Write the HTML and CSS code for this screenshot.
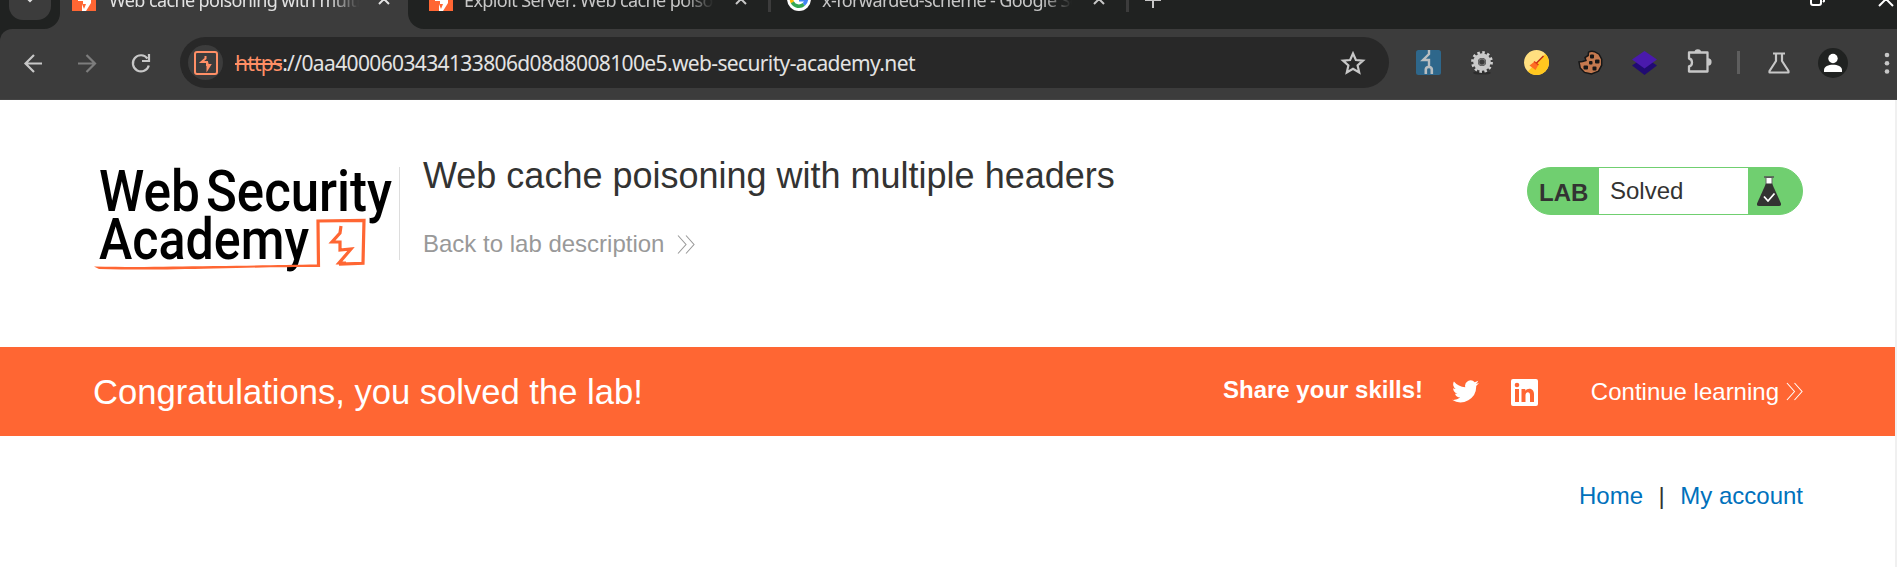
FILE: index.html
```html
<!DOCTYPE html>
<html lang="en">
<head>
<meta charset="utf-8">
<title>Web cache poisoning with multiple headers</title>
<link rel="stylesheet" href="styles.css">
</head>
<body>
<div class="browser">
  <div class="tabstrip">
    <div class="strip-start"><div class="tab-search"><svg width="12" height="8" viewBox="0 0 12 8"><path d="M1 1l5 5 5-5" fill="none" stroke="#ddd" stroke-width="2.2"/></svg></div></div>
    <div class="tab active">
      <svg class="favicon" width="24" height="24" viewBox="0 0 24 24"><path fill="#ff6633" d="M0 0h24v24H0z"/><path fill="#fff" d="M13 0L6 12v2h5v3h-1v7h4l5-8v-3h-5V0z"/><path fill="#ff6633" d="M10 17h4l-2 5z"/></svg>
      <span class="tab-title">Web cache poisoning with multiple</span>
      <svg class="close" width="12" height="12" viewBox="0 0 12 12"><path d="M1 1l10 10M11 1L1 11" stroke="#e3e3e3" stroke-width="2"/></svg>
    </div>
    <div class="strip-rest">
      <div class="tab second">
        <svg class="favicon" width="24" height="24" viewBox="0 0 24 24"><path fill="#ff6633" d="M0 0h24v24H0z"/><path fill="#fff" d="M13 0L6 12v2h5v3h-1v7h4l5-8v-3h-5V0z"/><path fill="#ff6633" d="M10 17h4l-2 5z"/></svg>
        <span class="tab-title">Exploit Server: Web cache poisoning</span>
        <svg class="close" width="12" height="12" viewBox="0 0 12 12"><path d="M1 1l10 10M11 1L1 11" stroke="#c7c7c7" stroke-width="2"/></svg>
      </div>
      <i class="tab-rule"></i>
      <div class="tab third">
        <svg class="favicon" width="24" height="24" viewBox="0 0 24 24"><circle cx="12" cy="12" r="12" fill="#fff"/><g fill="none" stroke-width="3.6"><path stroke="#fbbc05" d="M5.2 9a7.4 7.4 0 0 0 .3 6.6"/><path stroke="#34a853" d="M5.4 15.4a7.4 7.4 0 0 0 11.4 2"/><path stroke="#4285f4" d="M12 12.6h7.4a7.4 7.4 0 0 1-2.6 4.8"/></g></svg>
        <span class="tab-title">x-forwarded-scheme - Google Search</span>
        <svg class="close" width="12" height="12" viewBox="0 0 12 12"><path d="M1 1l10 10M11 1L1 11" stroke="#c7c7c7" stroke-width="2"/></svg>
      </div>
      <i class="tab-rule"></i>
      <svg class="new-tab" width="16" height="16" viewBox="0 0 16 16"><path d="M8 0v16M0 8h16" stroke="#c7c7c7" stroke-width="2"/></svg>
      <svg class="restore" width="16" height="16" viewBox="0 0 16 16"><rect x="1" y="4" width="10" height="11" rx="2" fill="none" stroke="#fff" stroke-width="2"/><path d="M4 1h8q2 0 2 2v8l-1 1" fill="none" stroke="#fff" stroke-width="2"/></svg>
      <svg class="win-close" width="16" height="16" viewBox="0 0 16 16"><path d="M1 1l14 14M15 1L1 15" stroke="#fff" stroke-width="2"/></svg>
    </div>
  </div>
  <div class="toolbar">
    <div class="navs">
      <svg width="54" height="28" viewBox="0 0 54 28"><path d="M42 14H25.500M34 5.500L25.500 14l8.500 8.500" transform="translate(0 .5)" fill="none" stroke="#c7c7c7" stroke-width="2.200"/></svg>
      <svg width="54" height="28" viewBox="0 0 54 28"><path d="M24 14.500h17M32.500 6l8.500 8.500-8.500 8.500" fill="none" stroke="#7d7d7d" stroke-width="2.200"/></svg>
      <svg width="54" height="28" viewBox="0 0 54 28"><path d="M40 9.500A8.100 8.100 0 1 0 41.300 16.500" transform="translate(-.5 0)" fill="none" stroke="#c7c7c7" stroke-width="2.200"/><path d="M41 5v7h-7" fill="none" stroke="#c7c7c7" stroke-width="2.200"/></svg>
    </div>
    <div class="address">
      <span class="site"><svg width="24" height="24" viewBox="0 0 24 24"><rect x="1" y="1" width="22" height="22" rx="2" fill="none" stroke="#ff8f66" stroke-width="2"/><path d="M11.500 5v2.500L7.500 11h5.500v3h3l-2.500 4v-6.500" fill="none" stroke="#ff8f66" stroke-width="2"/></svg></span>
      <span class="scheme">https</span><span class="url">://0aa4000603434133806d08d8008100e5.web-security-academy.net</span>
      <svg class="star" width="26" height="26" viewBox="0 0 26 26"><path d="M13 3.500l2.900 6.500 7.100.7-5.400 4.700 1.600 7-6.200-3.700-6.200 3.700 1.600-7L3 10.700l7.100-.7z" fill="none" stroke="#c7c7c7" stroke-width="2.200"/></svg>
    </div>
    <div class="exts">
      <span class="ext"><svg width="25" height="25" viewBox="0 0 25 25"><rect width="25" height="25" rx="2.500" fill="#2e678b"/><path d="M13 0v4L7 10h6v7" fill="none" stroke="#b9bec1" stroke-width="2.400"/><path d="M9.800 24v-4.500q0-2.500 3-2.500t3 2.500V24" fill="none" stroke="#b9bec1" stroke-width="2.600"/></svg></span>
      <span class="ext"><svg width="24" height="26" viewBox="-12 -12 24 26"><ellipse cy="11" rx="9" ry="1.600" fill="#2c2c2c"/><circle r="9.500" fill="none" stroke="#d0d0d0" stroke-width="2.800" stroke-dasharray="2.500 2.474"/><circle r="6.300" fill="none" stroke="#c9c9c9" stroke-width="5"/><circle r="4" fill="#3c3c3c"/><circle r="3.200" fill="none" stroke="#777" stroke-width="1.200"/></svg></span>
      <span class="ext"><svg width="25" height="25" viewBox="0 0 25 25"><circle cx="12.500" cy="12.500" r="12.500" fill="#ffdf80"/><path d="M21.400 3.700A12.500 12.500 0 0 1 3.700 21.400z" fill="#ffc71f"/><path d="M19.500 6l-7.500 7.500" stroke="#c12d17" stroke-width="1.500"/><path d="M10 12l4 3.500-2.500 4.500-6-4.500z" fill="#ff6d22"/><path d="M10 11.500l4.500 3.500" stroke="#e43818" stroke-width="1.500"/></svg></span>
      <span class="ext"><svg width="25" height="25" viewBox="0 0 25 25"><path d="M10.500 2.200q3-1.800 6-.5l4.500 2.500 2.700 5v6l-3.200 6-7 2.800-7-1.600-4.300-4.500-1.200-6L4.500 11.500l3.500-1-1-3 3.200-2z" fill="#c4794f" stroke="#171717" stroke-width="1.500"/><g fill="#171717"><rect x="12" y="4.500" width="4" height="4" rx="1"/><rect x="17" y="9.500" width="4.500" height="4" rx="1"/><rect x="11" y="11" width="3.500" height="3.500" rx="1"/><rect x="5.500" y="15.500" width="4.500" height="4" rx="1"/><rect x="14.500" y="16.500" width="4" height="4" rx="1"/></g></svg></span>
      <span class="ext"><svg width="25" height="25" viewBox="0 0 25 25"><path d="M12.500 7L25 15.500 12.500 25 0 15.500z" fill="#210b72"/><path d="M12.500 1L25 9.500 12.500 18.500 0 9.500z" fill="#4a1aad"/></svg></span>
      <span class="ext"><svg class="puzzle" width="26" height="26" viewBox="0 0 26 26"><path d="M3 4.500h18.500v19H3v-5q3-.5 3-4t-3-4z" fill="none" stroke="#c7c7c7" stroke-width="2.300" stroke-linejoin="round"/><path d="M8.500 4.500a3.300 3.300 0 0 1 6.600 0zM22 10.300a3.600 3.600 0 0 1 0 7.200z" fill="#c7c7c7"/></svg></span>
      <i class="ext-rule"></i>
      <span class="ext"><svg width="24" height="24" viewBox="0 0 24 24"><path d="M6 2.500h12M9 3v7L2.500 20v1.500h19V20L15 10V3" fill="none" stroke="#c7c7c7" stroke-width="2.200" stroke-linejoin="round"/></svg></span>
      <span class="ext"><svg width="30" height="30" viewBox="0 0 30 30"><circle cx="15" cy="15" r="15" fill="#202221"/><circle cx="15" cy="10.500" r="4.700" fill="#fff"/><path d="M6 24v-2c0-7 18-7 18 0v2z" fill="#fff"/></svg></span>
      <span class="ext"><svg width="6" height="24" viewBox="0 0 6 24"><g fill="#c7c7c7"><circle cx="3" cy="4" r="2.300"/><circle cx="3" cy="12.200" r="2.300"/><circle cx="3" cy="20.500" r="2.300"/></g></svg></span>
    </div>
  </div>
</div>

<main class="page">
  <header class="lab-header">
    <svg class="logo" width="306" height="118" viewBox="0 0 306 118">
      <g class="logo-text">
        <text x="5" y="57" textLength="101" lengthAdjust="spacingAndGlyphs">Web</text>
        <text x="112" y="57" textLength="186" lengthAdjust="spacingAndGlyphs">Security</text>
        <text x="5" y="105" textLength="210" lengthAdjust="spacingAndGlyphs">Academy</text>
      </g>
      <path d="M0 112.500c50 1 75 0 120-.5s70-1 104.500-1.500v2.500c-35 0-60 .5-104.500 1.500s-75 1.500-115 .500z" fill="#ff6633"/>
      <path d="M224.500 113L224 67l46-.7-1 43-24 .8" fill="none" stroke="#ff6633" stroke-width="3.200"/>
      <path d="M247 72l-1 7-8 9h8v8l11-1-12 14h7" fill="none" stroke="#ff6633" stroke-width="3.200"/>
    </svg>
    <div class="lab-info">
      <h1>Web cache poisoning with multiple headers</h1>
      <a class="back">Back to lab description <svg width="18" height="19" viewBox="0 0 18 19"><path d="M1 .5l8 9-8 9M9 .5l8 9-8 9" fill="none" stroke="currentColor" stroke-width="1.100"/></svg></a>
    </div>
    <div class="status">
      <span class="status-lab">LAB</span>
      <span class="status-text">Solved</span>
      <span class="status-icon"><svg width="24" height="31" viewBox="0 0 24 31"><path d="M9 1.500h6v8H9z" fill="#fff" stroke="#666" stroke-width="1"/><path d="M7 1h10" stroke="#555" stroke-width="1.400"/><path d="M9 7.500h6l9 20q.5 2.500-2 2.500H2q-2.500 0-2-2.500z" fill="#333332"/><path d="M7 20.500l4 4.500 6.500-7.500" fill="none" stroke="#fff" stroke-width="1.800"/></svg></span>
    </div>
  </header>
  <section class="banner">
    <h2>Congratulations, you solved the lab!</h2>
    <strong>Share your skills!</strong>
    <svg class="twitter" width="27" height="25" viewBox="0 0 24 20"><path fill="#fff" d="M24 2.400a10 10 0 0 1-2.800.8A5 5 0 0 0 23.300.500a10 10 0 0 1-3.100 1.200 4.900 4.900 0 0 0-8.400 4.500A14 14 0 0 1 1.700 1.100a4.900 4.900 0 0 0 1.500 6.500A5 5 0 0 1 1 7c0 2.400 1.700 4.400 3.900 4.900a5 5 0 0 1-2.200.1 4.900 4.900 0 0 0 4.600 3.400A10 10 0 0 1 0 17.400 14 14 0 0 0 21.500 5z"/></svg>
    <svg class="linkedin" width="27" height="27" viewBox="0 0 27 27"><rect width="27" height="27" rx="2" fill="#fff"/><path fill="#ff6633" d="M4 10h4v13H4zM10.500 10h3.800v1.800c2-3.200 8.700-3 8.700 3.200v8h-4v-7c0-4-4.500-3.600-4.500 0v7h-4z"/><circle cx="6" cy="6" r="2.300" fill="#ff6633"/></svg>
    <a class="continue">Continue learning <svg width="17" height="19" viewBox="0 0 18 19"><path d="M1 .5l8 9-8 9M9 .5l8 9-8 9" fill="none" stroke="currentColor" stroke-width="1.100"/></svg></a>
  </section>
  <nav class="links"><a>Home</a><span>|</span><a>My account</a></nav>
</main>
</body>
</html>
```
FILE: styles.css
```css
* { box-sizing: border-box; }
body { margin: 0; height: 567px; overflow: hidden; background: #fff; font-family: "Liberation Sans", Arial, sans-serif; font-size: 24px; line-height: 28px; color: #333332; }
svg { display: block; flex: none; }

.browser { background: #202221; font-family: "Noto Sans", "Open Sans", sans-serif; }
.tabstrip { display: flex; height: 29px; overflow: hidden; background: #3c3c3c; }
.strip-start { width: 60px; flex: none; background: #202221; border-radius: 0 0 16px 0; padding-left: 9px; }
.tab-search { width: 42px; height: 20px; background: #3c3c3c; border-radius: 0 0 14px 14px; display: flex; justify-content: center; }
.tab-search svg { margin-top: -5px; }
.tab { display: flex; flex: none; height: 24px; margin-top: -13px; }
.active { width: 348px; padding-left: 12px; }
.second { width: 360px; padding-left: 21px; }
.third { width: 355px; padding-left: 16px; }
.tab-title { width: 250px; height: 32px; margin-left: 13px; overflow: hidden; white-space: nowrap; font-size: 18px; line-height: 27px; letter-spacing: -0.6px; color: #e3e3e3; mask-image: linear-gradient(90deg, #000 88%, transparent); }
.strip-rest .tab-title { color: #c7c7c7; margin-left: 11px; }
.close { margin: 6px 0 0 19px; }
.strip-rest .close { margin-left: 21px; }
.strip-rest { display: flex; flex: 1; background: #202221; border-radius: 0 0 0 16px; }
.tab-rule { width: 3px; height: 12px; background: #3c3c3c; flex: none; }
.new-tab { margin: -8px 0 0 16px; }
.restore { margin: -10px 0 0 auto; }
.win-close { margin: -9px 3px 0 52px; }

.toolbar { display: flex; align-items: center; height: 71px; padding: 0 0 3px; background: #3c3c3c; border-bottom: 1px solid #454545; border-radius: 12px 0 0 0; overflow: hidden; }
.navs { display: flex; width: 180px; flex: none; }
.address { display: flex; align-items: center; width: 1209px; height: 51px; flex: none; padding: 0 23px 0 8px; border-radius: 26px; background: #282828; font-size: 21px; white-space: nowrap; color: #e3e3e3; }
.site { display: grid; place-items: center; width: 35px; height: 35px; margin-right: 12px; border-radius: 50%; background: #3c3c3c; }
.scheme { color: #ff8f66; text-decoration: line-through; letter-spacing: -0.8px; }
.url { letter-spacing: -0.63px; }
.star { margin-left: auto; }
.exts { display: flex; align-items: center; padding-left: 12px; }
.ext { display: grid; place-items: center; width: 54px; flex: none; }
.ext-rule { width: 3px; height: 23px; margin: 0 12px; background: #5e5e5e; flex: none; }
.puzzle { margin: -4px 0 0 2px; }

.page { height: 467px; border-right: 2px solid #f0f0f0; }
.lab-header { display: flex; align-items: flex-start; height: 247px; padding: 54px 92px 0 94px; }
.logo-text { font-family: Roboto, sans-serif; font-size: 58px; font-weight: 500; fill: #000; }
.lab-info { width: 1127px; height: 93px; flex: none; margin: 13px 0 0 -1px; border-left: 1px solid #ddd; padding-left: 23px; }
h1 { margin: -12px 0 33px; font-size: 36px; font-weight: 400; line-height: 42px; white-space: nowrap; }
.back { display: flex; align-items: center; gap: 13px; color: #999; }
.status { display: flex; width: 276px; height: 48px; margin: 13px 0 0 1px; border: 1px solid #70cf70; border-radius: 24px; background: #70cf70; overflow: hidden; }
.status-lab { width: 71px; padding: 11px 0 0 11px; font-weight: 700; }
.status-text { width: 149px; padding: 9px 0 0 11px; background: #fff; }
.status-icon { padding: 8px 0 0 9px; }
.banner { display: flex; align-items: center; height: 89px; padding: 0 92px 0 93px; background: #ff6633; color: #fff; }
h2 { width: 1130px; flex: none; margin: 0; font-size: 34.600px; font-weight: 400; }
strong { width: 229px; flex: none; margin-top: -3px; }
.twitter { margin-right: 32px; }
.linkedin { margin-top: 1px; }
.continue { display: flex; align-items: center; gap: 7px; margin-left: auto; white-space: nowrap; }
.links { display: flex; justify-content: flex-end; gap: 15.500px; padding: 46px 92px 0; }
.links a { color: #0071bc; }
```
